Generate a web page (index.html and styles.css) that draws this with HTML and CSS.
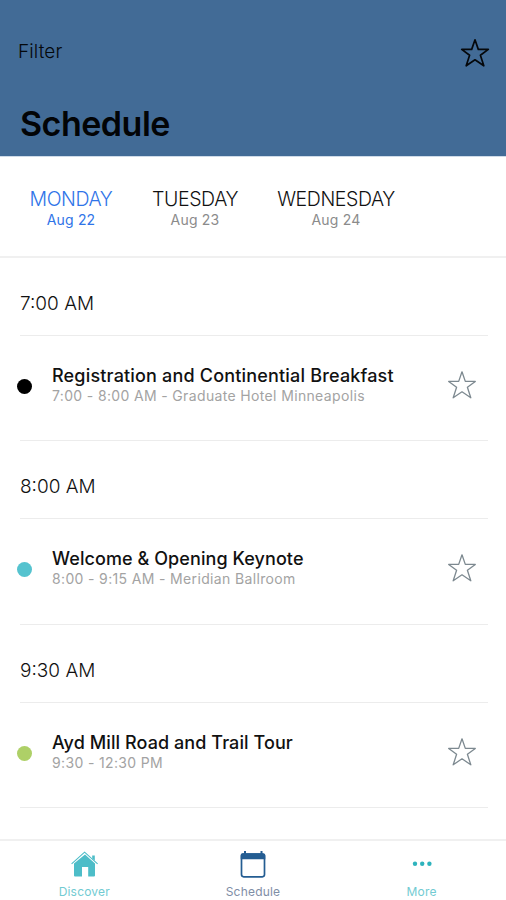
FILE: index.html
```html
<!DOCTYPE html>
<html lang="en">
<head>
<meta charset="utf-8">
<title>Schedule</title>
<link rel="stylesheet" href="styles.css">
</head>
<body>
<svg class="defs" width="0" height="0" aria-hidden="true">
  <symbol id="star" viewBox="0 0 30 30"><path stroke-linejoin="round" d="M15 1.8 L18.3 11.4 H28.3 L20.4 17.3 L23.8 27.8 L15 21.8 L6.2 27.8 L9.6 17.3 L1.7 11.4 H11.7 Z"/></symbol>
</svg>
<div class="app">
  <header class="header">
    <div class="toolbar"><span class="filter">Filter</span><svg class="star star-dark"><use href="#star"/></svg></div>
    <h1><span>Schedule</span></h1>
  </header>
  <nav class="days">
    <div class="day mon active"><span class="name">MONDAY</span><span class="date">Aug 22</span></div>
    <div class="day tue"><span class="name">TUESDAY</span><span class="date">Aug 23</span></div>
    <div class="day wed"><span class="name">WEDNESDAY</span><span class="date">Aug 24</span></div>
  </nav>
  <main class="list">
    <section>
      <h2>7:00 AM</h2>
      <article class="event"><i class="dot black"></i><div class="info"><h3 class="wide">Registration and Continential Breakfast</h3><p>7:00 - 8:00 AM - Graduate Hotel Minneapolis</p></div><svg class="star"><use href="#star"/></svg></article>
    </section>
    <section>
      <h2>8:00 AM</h2>
      <article class="event"><i class="dot teal"></i><div class="info"><h3>Welcome &amp; Opening Keynote</h3><p>8:00 - 9:15 AM - Meridian Ballroom</p></div><svg class="star"><use href="#star"/></svg></article>
    </section>
    <section>
      <h2>9:30 AM</h2>
      <article class="event"><i class="dot green"></i><div class="info"><h3>Ayd Mill Road and Trail Tour</h3><p>9:30 - 12:30 PM</p></div><svg class="star"><use href="#star"/></svg></article>
    </section>
  </main>
  <footer class="tabs">
    <div class="tab"><svg width="30" height="30" viewBox="0 0 30 30"><path fill="#4dbdc8" d="M5 14.6 L16 5.6 L26 14.4 V26.6 Q26 27.6 25 27.6 H19.2 V18 H13 V27.6 H6 Q5 27.6 5 26.6 Z"/><path fill="none" stroke="#4dbdc8" stroke-width="1.1" d="M2.6 14.8 L15.6 3.2 L28.6 14.8"/><path fill="#4dbdc8" d="M23.2 6.4 h2.6 v5.4 l-2.6 -2.3 Z"/></svg><span>Discover</span></div>
    <div class="tab current"><svg width="30" height="30" viewBox="0 0 30 30"><rect x="3.5" y="5" width="23" height="22.8" rx="2.2" fill="none" stroke="#245d92" stroke-width="1.7"/><path fill="#245d92" d="M2.7 10.3 V6 Q2.7 4.3 4.5 4.3 H6 V2 H8 V4.3 H22.5 V2 H24.5 V4.3 Q27.3 4.3 27.3 6 V10.3 Z"/></svg><span>Schedule</span></div>
    <div class="tab more"><svg width="30" height="30" viewBox="0 0 30 30" fill="#2eb3bd"><circle cx="8" cy="14.7" r="2.2"/><circle cx="15.2" cy="14.7" r="2.2"/><circle cx="22.4" cy="14.7" r="2.2"/></svg><span>More</span></div>
  </footer>
</div>
</body>
</html>
```
FILE: styles.css
```css
* { box-sizing: border-box; }
body { margin: 0; background: #fff; font-family: Inter, "Liberation Sans", sans-serif; color: #111; }
h1, h2, h3, p { margin: 0; }
.defs { display: block; }
.app { width: 506px; height: 900px; display: flex; flex-direction: column; overflow: hidden; }
.star { width: 30px; height: 30px; fill: none; stroke: #7d8990; stroke-width: 1.3; flex: none; }
.star-dark { stroke: #05080b; stroke-width: 1.7; margin-top: 1px; }
.header { height: 157px; flex: none; background: #426b96; border-bottom: 1px solid #cfdbe8; padding: 37px 16px 0 18px; }
.toolbar { display: flex; justify-content: space-between; height: 30px; line-height: 30px; }
.filter { font-size: 19px; font-weight: 300; color: #05080b; letter-spacing: .1px; }
h1 { font-size: 34px; line-height: 40px; font-weight: 600; letter-spacing: -.5px; margin: 37px 0 0 2px; color: #020406; }
.days { height: 101px; flex: none; display: flex; gap: 40px; padding: 30px 0 0 30px; border-bottom: 2px solid #f0f0f0; }
.day { display: flex; flex-direction: column; align-items: center; white-space: nowrap; }
.mon { width: 82px; }
.tue { width: 86px; }
.wed { width: 118px; margin-left: -1px; }
.name { font-size: 19.5px; line-height: 24px; font-weight: 300; letter-spacing: -.4px; }
.date { font-size: 14px; line-height: 17px; color: #8b8b8b; letter-spacing: .2px; }
.active, .active .date { color: #2f74e8; }
.list { flex: 1; min-height: 0; overflow: hidden; padding: 0 18px 0 20px; }
section { height: 183.4px; }
h2 { height: 77px; line-height: 92px; font-size: 19px; font-weight: 300; }
.event { height: 106.4px; border: solid #ececec; border-width: 1.5px 0; display: flex; align-items: flex-start; }
.dot { width: 15px; height: 15px; border-radius: 50%; margin: 43px 19px 0 -3px; flex: none; }
.event .star { margin: 34px 11px 0 0; }
.black { background: #000; }
.teal { background: #55c3cf; }
.green { background: #aed067; }
.info { flex: 1; padding: 28px 0 0 1px; white-space: nowrap; }
h3 { font-size: 18px; line-height: 23px; font-weight: 500; letter-spacing: .08px; }
.wide { letter-spacing: .18px; }
p { font-size: 14px; line-height: 17px; color: #a3a3a3; letter-spacing: .35px; }
.tabs { height: 61px; flex: none; display: grid; grid-template-columns: repeat(3, 1fr); border-top: 2px solid #f0f0f0; padding-top: 8px; }
.tab { display: flex; flex-direction: column; align-items: center; font-size: 12px; line-height: 17px; color: #72cbd2; }
.tab span { margin-top: 4px; letter-spacing: .2px; }
.current { color: #7f8ea6; }
```
